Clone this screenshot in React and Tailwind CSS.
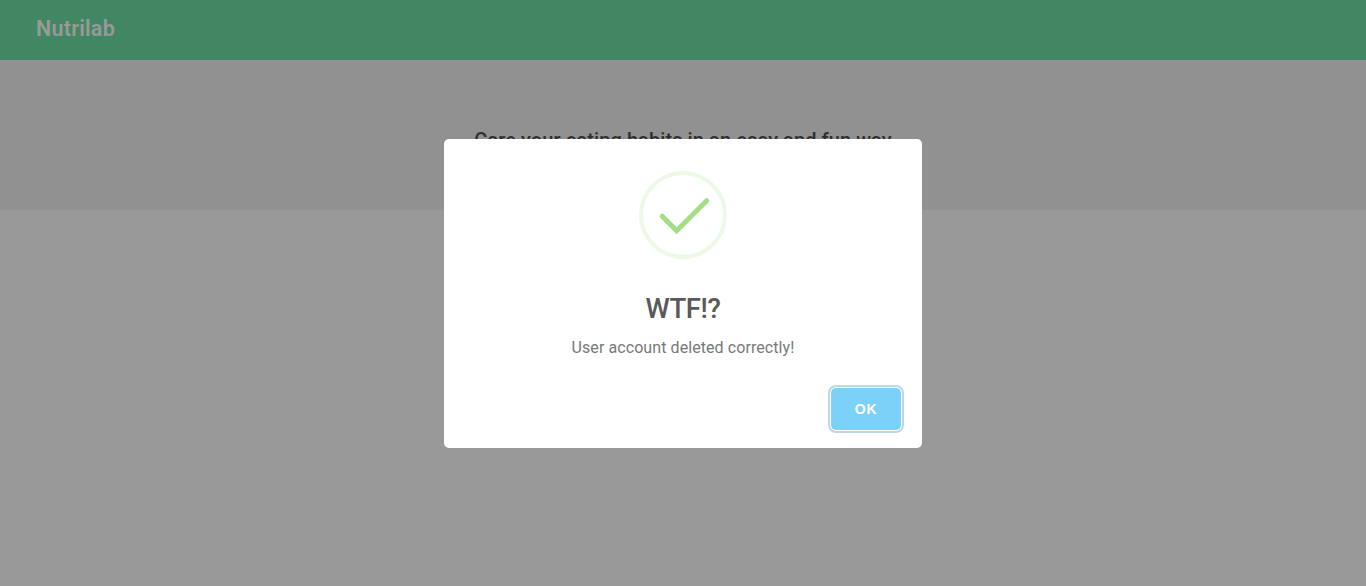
export default function App() {
  return (
    <div className="relative h-[586px] w-full overflow-hidden bg-[#999999] font-['Roboto',sans-serif]">
      <header className="flex h-[60px] items-center bg-[#428763] px-9 pb-[2px]">
        <span className="text-[21.5px] leading-[32px] font-semibold tracking-[0.25px] text-[#999999]">Nutrilab</span>
      </header>
      <section className="flex h-[150px] items-start justify-center bg-[#919191] pt-[65px]">
        <h1 className="text-xl leading-[30px] font-medium tracking-[0.08px] text-[#2f2f2f]">
          Care your eating habits in an easy and fun way
        </h1>
      </section>
      <div className="absolute inset-0 flex items-center justify-center">
        <div role="dialog" className="mt-px flex h-[309px] w-[478px] flex-col items-center rounded-[5px] bg-white">
          <svg className="mt-8 size-[88px] shrink-0" viewBox="0 0 88 88" fill="none">
            <circle cx="44" cy="44" r="42" stroke="#edf8e7" strokeWidth="4" />
            <path d="M23.2 45.2L37.7 59.7L67.7 29.7" stroke="#a5dc86" strokeWidth="5" strokeLinecap="round" />
          </svg>
          <h2 className="mt-[30px] text-[27.5px] leading-[40px] font-medium tracking-[-0.4px] text-[#595959]">WTF!?</h2>
          <p className="mt-[6px] text-base leading-[26px] tracking-[0.08px] text-[#797979]">
            User account deleted correctly!
          </p>
          <div className="mt-[27px] flex w-full justify-end pr-[21px]">
            <button className="h-[42px] w-[70px] rounded-[5px] bg-[#7cd1f9] font-['Liberation_Sans',sans-serif] text-sm font-bold tracking-[0.8px] text-white shadow-[0_0_0_1px_#fff,0_0_0_3px_rgba(43,114,165,0.29)]">
              OK
            </button>
          </div>
        </div>
      </div>
    </div>
  );
}
